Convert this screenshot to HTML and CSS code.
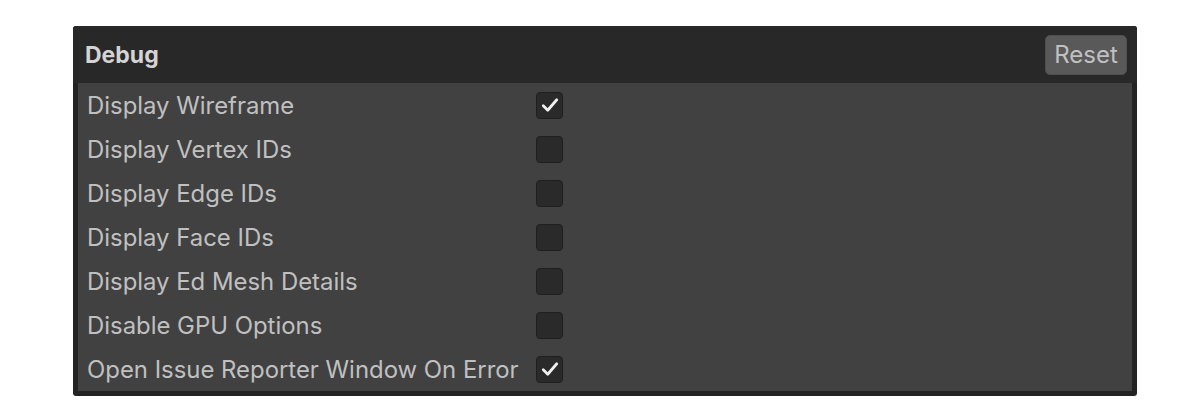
FILE: index.html
```html
<!DOCTYPE html>
<html>
<head>
<meta charset="utf-8">
<link rel="stylesheet" href="styles.css">
</head>
<body>
<div class="panel">
  <div class="header">
    <span class="title">Debug</span>
    <button class="reset">Reset</button>
  </div>
  <div class="content">
    <div class="row"><span class="label">Display Wireframe</span><span class="cb checked"><svg viewBox="0 0 16 16"><path d="M3.5 8.5 L6.5 11.5 L12.5 4.5"/></svg></span></div>
    <div class="row"><span class="label">Display Vertex IDs</span><span class="cb"></span></div>
    <div class="row"><span class="label">Display Edge IDs</span><span class="cb"></span></div>
    <div class="row"><span class="label">Display Face IDs</span><span class="cb"></span></div>
    <div class="row"><span class="label">Display Ed Mesh Details</span><span class="cb"></span></div>
    <div class="row"><span class="label">Disable GPU Options</span><span class="cb"></span></div>
    <div class="row"><span class="label">Open Issue Reporter Window On Error</span><span class="cb checked"><svg viewBox="0 0 16 16"><path d="M3.5 8.5 L6.5 11.5 L12.5 4.5"/></svg></span></div>
  </div>
</div>
</body>
</html>
```
FILE: styles.css
```css
html, body {
  margin: 0;
  padding: 0;
  background: #ffffff;
}
body {
  padding: 26px 63px 0 73px;
  font-family: Inter, "Noto Sans", sans-serif;
}
.panel {
  width: 1064px;
  height: 370px;
  box-sizing: border-box;
  background: #232323;
  border-radius: 3px;
  padding: 0 5px 5px 5px;
  display: flex;
  flex-direction: column;
}
.header {
  height: 57px;
  display: flex;
  align-items: center;
  justify-content: space-between;
  background: #282828;
  margin: 0 -5px;
  padding-left: 12px;
  padding-right: 10px;
  border-radius: 3px 3px 0 0;
}
.title {
  font-size: 23px;
  font-weight: 700;
  color: #d4d4d4;
}
.reset {
  font-family: Inter, "Noto Sans", sans-serif;
  font-size: 24px;
  color: #c0c0c0;
  background: #595959;
  border: 1px solid #4e4e4e;
  border-radius: 5px;
  width: 82px;
  height: 40px;
  padding: 0;
}
.content {
  flex: 1;
  background: #414141;
  display: flex;
  flex-direction: column;
}
.row {
  height: 44px;
  display: flex;
  align-items: center;
  padding-left: 9px;
}
.label {
  width: 449px;
  font-size: 23.9px;
  color: #c0c0c0;
  white-space: nowrap;
}
.cb {
  width: 27px;
  height: 27px;
  box-sizing: border-box;
  background: #2a2a2a;
  border: 1px solid #1f1f1f;
  border-radius: 4px;
  display: flex;
  align-items: center;
  justify-content: center;
}
.cb svg {
  width: 24px;
  height: 24px;
  fill: none;
  stroke: #f0f0f0;
  stroke-width: 1.8;
  stroke-linecap: round;
  stroke-linejoin: round;
}
```
